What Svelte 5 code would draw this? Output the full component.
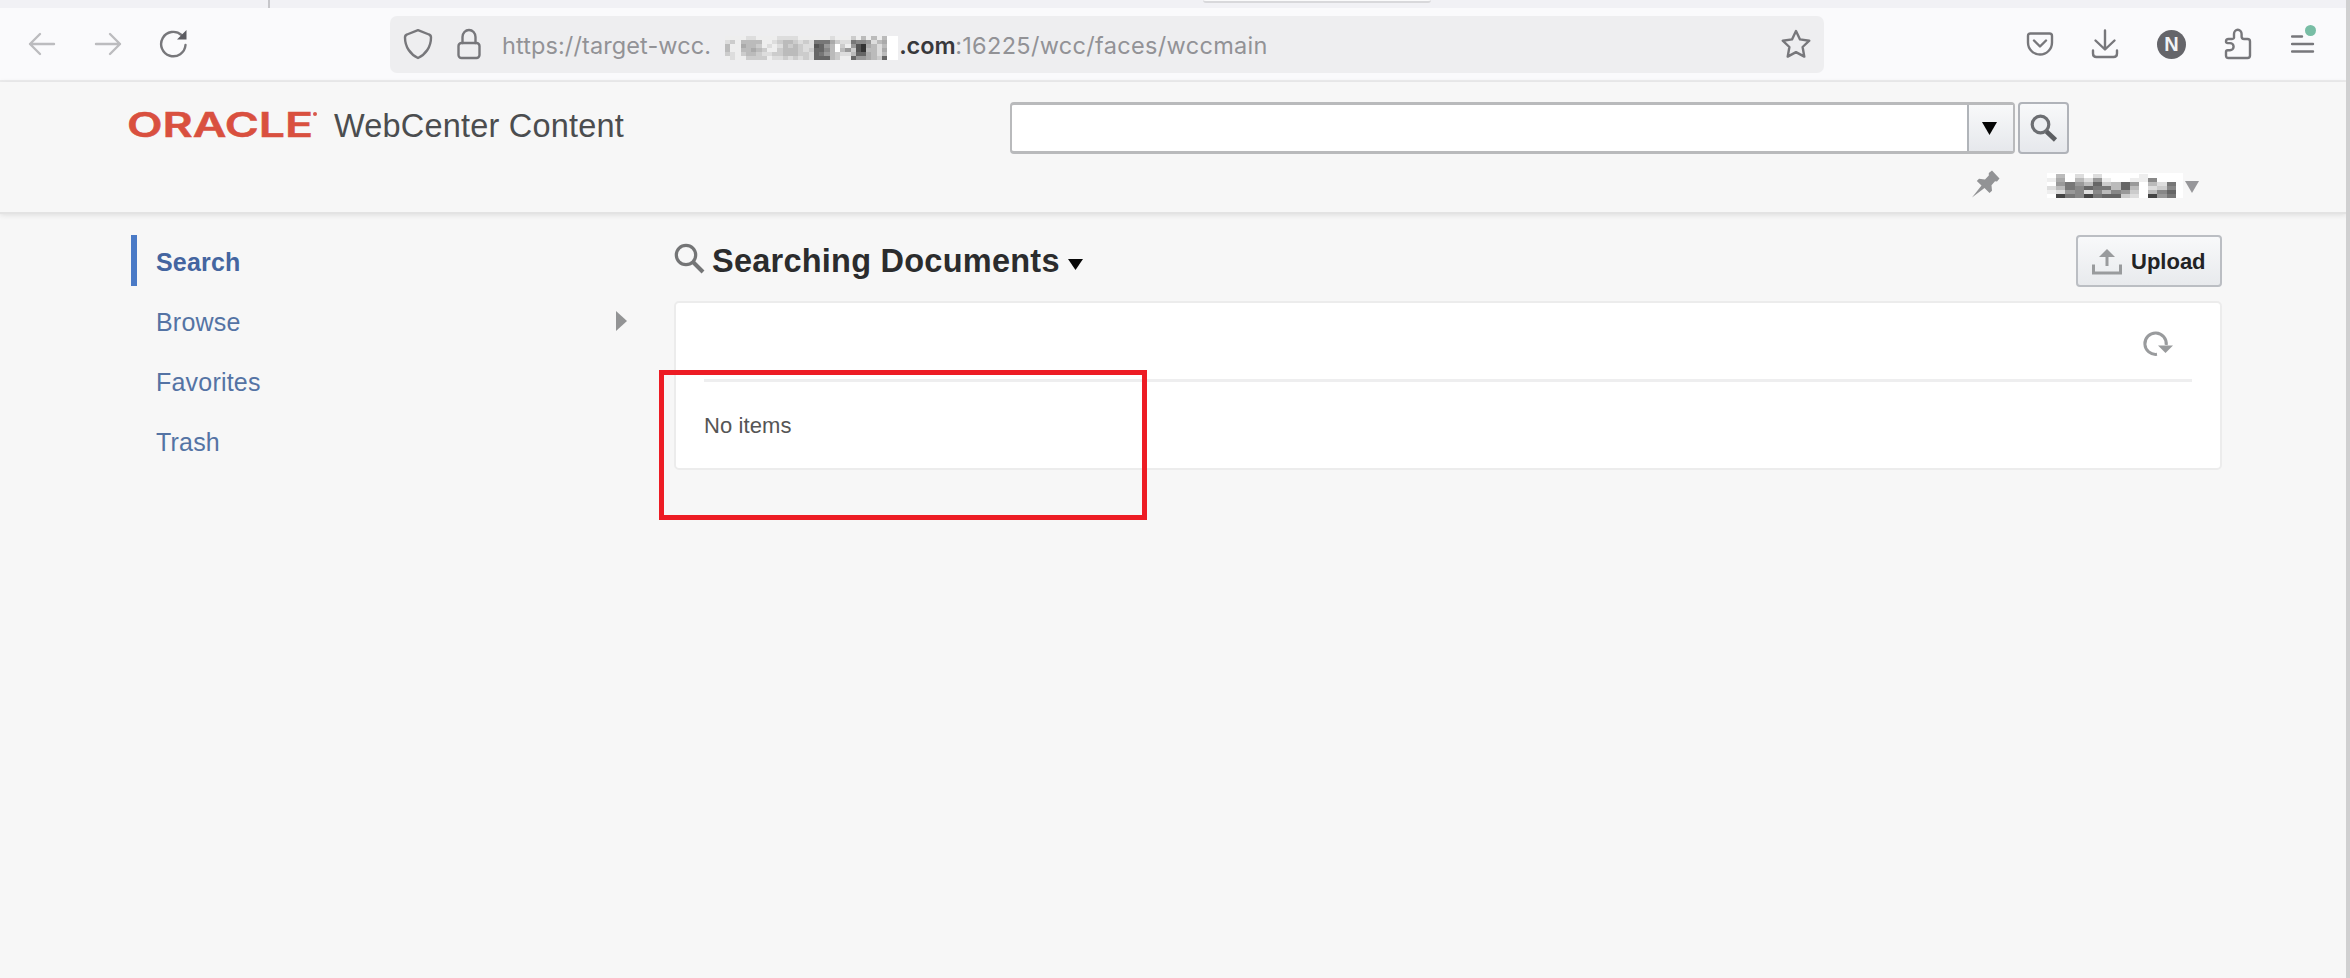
<script>
  const nav = [
    { label: 'Search', active: true },
    { label: 'Browse', children: true },
    { label: 'Favorites' },
    { label: 'Trash' },
  ];

  // Pixelated redaction blocks: one hex digit per cell, 0 = dark, f = white.
  const hostMask = [
    'eeeeddeeeeddddeeeeeedeeecebebeb',
    'dcebbbbeedcbbcdcd777acdd7889dba',
    'beeabbcededbcbcdd569bfce953abdb',
    'beebbabceecbbbcdc668bfb9c53bbda',
    'cdecbbcddccbbbccd679bcddb66abdb',
    'edeecccceddcdcdcd666bcee699abc6',
  ];
  const userMask = [
    'fbfdfdffffefff',
    'eafbd9effee8ff',
    'f979b6cb69fbd7',
    'db78677b6bfdc8',
    'ed98d8b89cfb86',
    'f4784766cdf497',
  ];
  const shade = (c) => `#${c}${c}${c}`;
</script>

{#snippet mask(rows, cw, ch)}
  <svg class="mask" width={rows[0].length * cw} height={rows.length * ch} shape-rendering="crispEdges" aria-hidden="true">
    {#each rows as row, y}
      {#each row.split('') as c, x}
        <rect x={x * cw} y={y * ch} width={cw} height={ch} fill={shade(c)} />
      {/each}
    {/each}
  </svg>
{/snippet}

<div class="window">
  <div class="tabs"><i class="divider"></i><i class="tab"></i></div>
  <div class="toolbar">
    <svg class="t-back" width="28" height="24" viewBox="0 0 28 24"><path d="M26 12H2M12 2 2 12l10 10" /></svg>
    <svg class="t-fwd" width="28" height="24" viewBox="0 0 28 24"><path d="M2 12h24M16 2l10 10-10 10" /></svg>
    <svg class="t-reload" width="30" height="30" viewBox="0 0 30 30"><path d="M26.500 16A12.200 12.200 0 1 1 22.500 6" /><path d="M27.500 1v9.500H18Z" fill="#5c5c62" stroke="none" /></svg>
    <div class="url">
      <svg class="shield" width="30" height="32" viewBox="0 0 30 32"><path d="M15 2.200 26 6.500Q28 7.200 28 9.500C28 19 22.500 26.500 15 30 7.500 26.500 2 19 2 9.500Q2 7.200 4 6.500Z" /></svg>
      <svg class="lock" width="26" height="32" viewBox="0 0 26 32"><rect x="2.500" y="15" width="21" height="15" rx="3" /><path d="M6.500 15V9a6.500 7 0 0 1 13 0v6" /></svg>
      <span class="addr host">https://target-wcc.</span>
      <span class="hidden">{@render mask(hostMask, 5.23, 4)}</span>
      <span class="addr dom">.com</span>
      <span class="addr path">:16225/wcc/faces/wccmain</span>
      <svg class="star" width="32" height="30" viewBox="0 0 32 30"><path d="m16 2 4 8.400 9.300 1.300-6.700 6.300 1.700 9.600-8.300-4.500-8.300 4.500 1.700-9.600-6.700-6.300L12 10.400Z" /></svg>
    </div>
    <div class="tools">
      <svg width="28" height="26" viewBox="0 0 28 26"><path d="M4.500 2.500h19Q26 2.500 26 5v6.500a12 12 0 0 1-24 0V5Q2 2.500 4.500 2.500ZM8 9.500l6 6 6-6" /></svg>
      <svg width="28" height="30" viewBox="0 0 28 30"><path d="M14 1.500V20M4.500 11.500 14 20.500l9.500-9M2 21.500v3Q2 28 5.500 28h17q3.500 0 3.500-3.500v-3" /></svg>
      <span class="badge">N</span>
      <svg width="28" height="32" viewBox="0 0 28 32"><path d="M4.500 11H8q2.500 0 2-2.500V6a3.800 4.200 0 0 1 7.600 0v2.500q0 2.500 2.500 2.500h3.400q2.500 0 2.500 2.500V27.500Q26 30 23.500 30h-19Q2 30 2 27.500V24q0-1.700 1.700-1.700H6a3.600 3.600 0 0 0 0-7.200H3.700Q2 15.100 2 13.500 2 11 4.500 11Z" /></svg>
      <span class="menu"><svg width="24" height="22" viewBox="0 0 24 22"><path d="M1 3.500h10M1 11h21M1 18.500h21" /></svg><i></i></span>
    </div>
  </div>

  <header>
    <div class="top">
      <svg class="oracle" width="192" height="38" viewBox="-2 -4 192 38"><text x="-1" y="26.500" textLength="186" lengthAdjust="spacingAndGlyphs">ORACLE</text><circle cx="187" cy="4" r="2" fill="#d9594a" /></svg>
      <span class="product">WebCenter Content</span>
      <div class="search">
        <div class="field"></div>
        <div class="drop"><svg width="15" height="13"><path d="M0 0h15L7.500 13Z" /></svg></div>
      </div>
      <div class="go"><svg width="28" height="28" viewBox="0 0 28 28"><circle cx="10.500" cy="10.500" r="8.300" stroke="#6c6e72" stroke-width="3.200" fill="#eceef1" /><path d="m16.500 17.500 9 8.500" stroke="#5c5e62" stroke-width="4.600" /></svg></div>
    </div>
    <div class="account">
      <svg class="pin" width="28" height="28" viewBox="0 0 28 28"><path d="m20 .500 7.500 8-2.500 3-2-.300-3.500 4 .500 5.500-2.500 2.300-5-5L0 27.500l9.500-12-4.700-4.500L7 8.700l6 .800L16.800 5.500V3Z" /></svg>
      <span class="user">{@render mask(userMask, 9.2, 4)}</span>
      <svg class="caret" width="14" height="12"><path d="M0 0h14L7 12Z" /></svg>
    </div>
  </header>

  <div class="body">
    <nav>
      {#each nav as item}
        <div class="item" class:active={item.active}>
          <span>{item.label}</span>
          {#if item.children}<svg width="11" height="20"><path d="M0 0 11 10 0 20Z" /></svg>{/if}
        </div>
      {/each}
    </nav>
    <main>
      <div class="title">
        <svg class="glass" width="31" height="32" viewBox="0 0 31 32"><circle cx="12" cy="12" r="9.700" /><path d="m19 19 10 10" stroke-width="4" /></svg>
        <h1>Searching Documents</h1>
        <svg class="down" width="15" height="11"><path d="M0 0h15L7.500 11Z" /></svg>
        <div class="upload">
          <svg width="30" height="26" viewBox="0 0 30 26"><path d="M15 17V7M1.500 15.500V24h27v-8.500" /><path class="solid" d="M15 0 23 8H7Z" /></svg>
          <span>Upload</span>
        </div>
      </div>
      <section>
        <div class="bar">
          <svg width="30" height="26" viewBox="0 0 30 26"><path d="M14 23.300A10.700 10.700 0 1 1 23.200 14" /><path class="solid" d="M15 14.500h15L22.500 22Z" /></svg>
        </div>
        <p>No items</p>
        <div class="highlight"></div>
      </section>
    </main>
  </div>
</div>

<style>
  :global(body) { background: #f7f7f7; overflow: hidden; }
  svg { display: block; fill: none; flex: none; }
  .window {
    box-sizing: border-box; width: 2350px; height: 978px; overflow: hidden;
    border-right: 4px solid #d0d0d1; background: #f7f7f7;
    font-family: "Liberation Sans", Arial, sans-serif; color: #333;
  }
  .tabs { display: flex; height: 8px; background: #f1f1f5; }
  .divider { width: 2px; margin-left: 268px; background: #c6c6ca; }
  .tab { width: 228px; height: 1px; margin-left: 933px; background: #fafafb; border-bottom: 2px solid #d8d8db; border-radius: 0 0 6px 6px; }
  .toolbar { display: flex; align-items: center; box-sizing: border-box; height: 74px; padding: 0 0 0 28px; background: #fafafc; border-bottom: 2px solid #ebebec; }
  .toolbar svg { stroke: #77777b; stroke-width: 2.400; stroke-linecap: round; stroke-linejoin: round; }
  .toolbar .t-back, .toolbar .t-fwd { stroke: #bcbcbf; }
  .toolbar .t-fwd { margin-left: 38px; }
  .toolbar .t-reload { margin-left: 37px; }
  .toolbar .mask { stroke: none; }
  .url { display: flex; align-items: center; box-sizing: border-box; width: 1434px; height: 57px; margin-left: 201px; padding: 0 12px 0 13px; background: #eeeef0; border-radius: 7px; }
  .lock { margin-left: 23px; }
  .addr { padding-top: 3px; font: 23.500px/30px Inter, sans-serif; color: #929296; white-space: nowrap; }
  .host { width: 224px; margin-left: 20px; letter-spacing: .1px; }
  .hidden { padding-right: 11px; margin: 7px 1px 0 -1px; background: #fff; }
  .dom { width: 56px; color: #38383b; font-weight: 600; }
  .path { letter-spacing: .320px; }
  .star { margin-left: auto; }
  .tools { display: flex; align-items: center; margin-left: 202px; }
  .tools > svg:nth-child(2) { margin-left: 37px; }
  .badge { width: 29px; height: 29px; margin-left: 38px; border-radius: 50%; background: #65656a; color: #f2f2f4; font: 700 20px/29px "Liberation Sans", sans-serif; text-align: center; }
  .tools > svg:nth-child(4) { margin-left: 38px; }
  .menu { position: relative; margin-left: 39px; }
  .menu i { position: absolute; left: 14px; top: -8px; width: 11px; height: 11px; border-radius: 50%; background: #78bda5; }

  header { box-sizing: border-box; height: 132px; background: #f7f7f7; border-bottom: 2px solid #e3e3e3; box-shadow: 0 1px 5px #ddd; padding: 20px 0 0 128px; }
  .top { display: flex; height: 52px; }
  .oracle { margin: 4px 0 0 -2px; }
  .oracle text { font: 600 33.500px Inter, sans-serif; fill: #d9503f; stroke: #d9503f; stroke-width: .500; }
  .product { width: 676px; margin-left: 16px; font-size: 32.500px; line-height: 48px; letter-spacing: .2px; color: #4b4d4f; }
  .search { display: flex; box-sizing: border-box; width: 1005px; border: 2px solid #b9babc; border-top-width: 3px; border-bottom-width: 3px; border-radius: 4px; background: #fff; }
  .field { flex: 1; }
  .drop { display: flex; align-items: center; justify-content: center; box-sizing: border-box; width: 46px; padding: 0 3px 0 0; border-left: 2px solid #b0b4b9; background: linear-gradient(#f8f9fa, #e6e8ec); }
  .drop path { fill: #050505; }
  .go { display: flex; align-items: center; justify-content: center; box-sizing: border-box; width: 51px; margin-left: 3px; border: 2px solid #b0b3b9; border-radius: 4px; background: linear-gradient(#f8f9fa, #e6e8ec); }
  .account { display: flex; margin: 16px 0 0 1844px; }
  .pin path { fill: #929395; }
  .user { width: 136px; height: 25px; margin: 3px 0 0 47px; background: #fff; }
  .user .mask { margin-top: 1px; }
  .caret { margin: 11px 0 0 2px; }
  .caret path { fill: #97979a; }

  .body { display: flex; padding: 21px 0 0 131px; }
  nav { width: 543px; }
  .item { display: flex; align-items: center; box-sizing: border-box; height: 51px; margin-bottom: 9.300px; padding: 3px 0 0 19px; border-left: 6px solid transparent; color: #5473a4; font-size: 25px; letter-spacing: .2px; }
  .item.active { border-color: #4a7ac6; color: #4465a0; font-weight: 700; }
  .item svg { margin: -2px 47px 0 auto; }
  .item path { fill: #939495; }
  main { width: 1548px; }
  .title { display: flex; align-items: flex-start; height: 66px; }
  .glass { margin: 8px 0 0; stroke: #747576; stroke-width: 3.200; }
  h1 { margin: 6px 0 0 7px; font-size: 32.500px; line-height: 40px; letter-spacing: .240px; color: #2b2c2d; white-space: nowrap; }
  .down { margin: 24px 0 0 8px; }
  .down path { fill: #080808; }
  .upload { display: flex; align-items: center; box-sizing: border-box; width: 146px; height: 52px; margin-left: auto; padding: 1px 0 0 14px; gap: 9px; border: 2px solid #bbbec3; border-radius: 4px; background: linear-gradient(#f8f9fa, #e8eaed); color: #222325; font-size: 22px; font-weight: 700; }
  .upload svg, .bar svg { stroke: #999b9d; stroke-width: 3; }
  svg .solid { fill: #999b9d; stroke: none; }
  section { position: relative; box-sizing: border-box; height: 169px; border: 2px solid #ececec; border-radius: 5px; background: #fff; padding: 0 28px; }
  .bar { display: flex; align-items: center; justify-content: flex-end; box-sizing: border-box; height: 79px; padding: 5px 19px 0 0; border-bottom: 3px solid #eeeeef; }
  p { margin: 29px 0 0; font-size: 22px; line-height: 30px; letter-spacing: .1px; color: #555; }
  .highlight { position: absolute; left: -17px; top: 67px; box-sizing: border-box; width: 488px; height: 150px; border: 5px solid #ed1c24; }
</style>
